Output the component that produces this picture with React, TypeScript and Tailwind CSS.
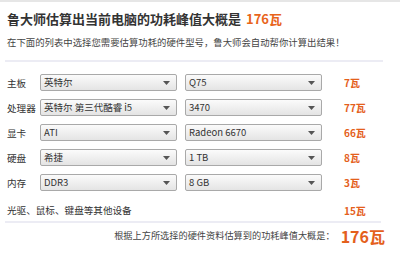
import { useState } from "react";

type Part = {
  label: string;
  brand: string;
  model: string;
  watts: string;
};

const parts: Part[] = [
  { label: "主板", brand: "英特尔", model: "Q75", watts: "7瓦" },
  { label: "处理器", brand: "英特尔 第三代酷睿 i5", model: "3470", watts: "77瓦" },
  { label: "显卡", brand: "ATI", model: "Radeon 6670", watts: "66瓦" },
  { label: "硬盘", brand: "希捷", model: "1 TB", watts: "8瓦" },
  { label: "内存", brand: "DDR3", model: "8 GB", watts: "3瓦" },
];

// fake dropdown box, looks like the old IE-style select
const SelectBox = ({ value }: { value: string }) => (
  <div className="relative flex items-center w-[137px] h-[17px] border border-[#a9a9a9] rounded-[2px] bg-gradient-to-b from-[#fbfbfb] to-[#e4e4e4] pl-[3px] text-[9.5px] text-[#333] leading-none">
    <span>{value}</span>
    <svg
      className="absolute right-[6px] top-1/2 -translate-y-1/2"
      width="7"
      height="4"
      viewBox="0 0 7 4"
    >
      <path d="M0 0 L7 0 L3.5 4 Z" fill="#555" />
    </svg>
  </div>
);

export default function App() {
  const [total] = useState("176瓦");

  return (
    <div
      className="w-[400px] h-[257px] bg-white border-t-2 border-[#e6e6e6] overflow-hidden"
      style={{ fontFamily: '"Noto Sans CJK SC", "Noto Sans", sans-serif' }}
    >
      {/* heading */}
      <div className="flex items-center h-[20px] mt-[6px] pl-[7px] text-[13px] font-bold text-[#333] leading-none">
        鲁大师估算出当前电脑的功耗峰值大概是
        <span className="ml-[5px] text-[#e8641b]">{total}</span>
      </div>
      <div className="flex items-center h-[14px] mt-[8px] pl-[7px] text-[9.4px] text-[#444] leading-none">
        在下面的列表中选择您需要估算功耗的硬件型号，鲁大师会自动帮你计算出结果！
      </div>
      <div className="mt-[10px] ml-[5px] w-[378px] h-[2px] bg-[#ececf4]" />

      {/* parts */}
      <div className="mt-[8px] pl-[7px]">
        {parts.map((p) => (
          <div key={p.label} className="flex items-center h-[25px]">
            <div className="w-[33px] text-[9.6px] text-[#333] leading-none pt-[3px]">{p.label}</div>
            <SelectBox value={p.brand} />
            <div className="ml-[8px]">
              <SelectBox value={p.model} />
            </div>
            <div className="ml-[22px] text-[10px] font-bold text-[#e4601c] leading-none">{p.watts}</div>
          </div>
        ))}
        <div className="flex items-center h-[20px] mt-[6px]">
          <div className="w-[337px] text-[9.6px] text-[#333] leading-none">光驱、鼠标、键盘等其他设备</div>
          <div className="text-[10px] font-bold text-[#e4601c] leading-none">15瓦</div>
        </div>
      </div>
      <div className="ml-[5px] w-[376px] h-[2px] bg-[#ececf4]" />

      {/* footer */}
      <div className="flex items-center justify-end h-[26px] pr-[15px]">
        <span className="text-[9.2px] text-[#444] leading-none">根据上方所选择的硬件资料估算到的功耗峰值大概是：</span>
        <span className="ml-[6px] text-[16px] font-bold text-[#e4601c] leading-none">{total}</span>
      </div>
    </div>
  );
}
